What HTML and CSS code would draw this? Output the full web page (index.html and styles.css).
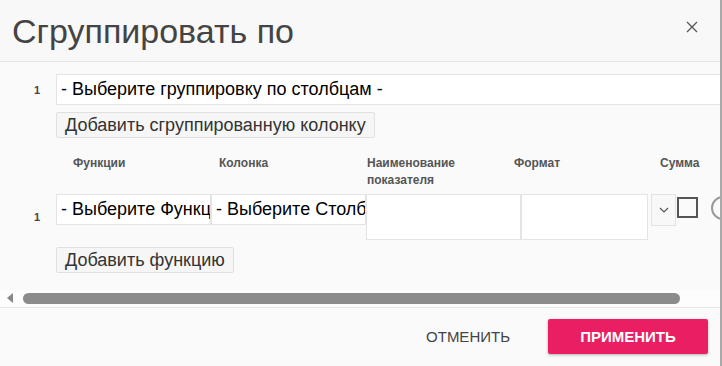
FILE: index.html
```html
<!DOCTYPE html>
<html lang="ru">
<head>
    <meta charset="UTF-8">
    <title>Сгруппировать по</title>
    <link rel="stylesheet" href="styles.css">
</head>
<body>
    <div class="modal">
        <header class="modal-header">
            <h1>Сгруппировать по</h1>
            <button class="close-btn" aria-label="Закрыть">
                <svg width="12" height="12" viewBox="0 0 12 12"><path d="M1 1 L11 11 M11 1 L1 11" stroke="#555" stroke-width="1.3" fill="none"/></svg>
            </button>
        </header>

        <div class="modal-body">
            <div class="scroll-area">
                <div class="row">
                    <span class="num">1</span>
                    <div class="field wide">- Выберите группировку по столбцам -</div>
                </div>
                <button class="add-btn">Добавить сгруппированную колонку</button>

                <div class="func-head">
                    <span>Функции</span>
                    <span>Колонка</span>
                    <span class="two-line">Наименование показателя</span>
                    <span>Формат</span>
                    <span>Сумма</span>
                </div>

                <div class="row func-row">
                    <span class="num">1</span>
                    <div class="field">- Выберите Функцию -</div>
                    <div class="field">- Выберите Столбец -</div>
                    <div class="field tall"></div>
                    <div class="field tall narrow"></div>
                    <div class="select-btn">
                        <svg width="10" height="6" viewBox="0 0 10 6"><path d="M1 1 L5 5 L9 1" stroke="#555" stroke-width="1.2" fill="none"/></svg>
                    </div>
                    <span class="checkbox"></span>
                    <span class="circle"></span>
                </div>
                <button class="add-btn">Добавить функцию</button>
            </div>

            <div class="scrollbar">
                <span class="arrow-left"></span>
                <span class="thumb"></span>
            </div>
        </div>

        <footer class="modal-footer">
            <button class="cancel-btn">Отменить</button>
            <button class="apply-btn">Применить</button>
        </footer>
    </div>
</body>
</html>
```

FILE: styles.css
```css
body {
    margin: 0;
    background-color: #a9a9a9;
    font-family: 'Liberation Sans', Arial, sans-serif;
    color: #333;
}

.modal {
    width: 720px;
    height: 366px;
    background-color: #fafafa;
    display: flex;
    flex-direction: column;
    overflow: hidden;
}

.modal-header {
    height: 61px;
    flex-shrink: 0;
    display: flex;
    justify-content: space-between;
    align-items: center;
    background-color: #f8f8f8;
    border-bottom: 1px solid #e6e6e6;
    padding: 0 22px 0 12px;
}

.modal-header h1 {
    margin: 0;
    font-size: 34px;
    font-weight: normal;
    color: #444;
    position: relative;
    top: 1px;
}

.close-btn {
    background: none;
    border: none;
    padding: 0;
    display: flex;
    position: relative;
    top: -4px;
}

.modal-body {
    height: 245px;
    flex-shrink: 0;
    display: flex;
    flex-direction: column;
    border-bottom: 1px solid #e8e8e8;
}

.scroll-area {
    flex: 1;
    overflow: hidden;
    padding-top: 12px;
}

.row {
    display: flex;
    align-items: center;
    white-space: nowrap;
}

.num {
    width: 56px;
    flex-shrink: 0;
    padding-left: 34px;
    box-sizing: border-box;
    font-size: 11px;
    font-weight: bold;
    color: #444;
}

.field {
    width: 155px;
    height: 31px;
    flex-shrink: 0;
    box-sizing: border-box;
    background-color: #fff;
    border: 1px solid #e4e4e4;
    padding: 4px 4px 0;
    font-size: 18px;
    color: #000;
    overflow: hidden;
}

.field.wide {
    width: 700px;
}

.field.tall {
    height: 46px;
    align-self: flex-start;
}

.field.narrow {
    width: 127px;
}

.add-btn {
    display: block;
    margin: 7px 0 0 56px;
    height: 26px;
    padding: 0 8px;
    background-color: #f6f6f6;
    border: 1px solid #e0e0e0;
    border-radius: 2px;
    font-family: 'Liberation Sans', Arial, sans-serif;
    font-size: 18px;
    line-height: 24px;
    color: #333;
}

.func-head {
    display: grid;
    grid-template-columns: 146px 148px 147px 146px auto;
    padding: 17px 0 0 73px;
    height: 39px;
    font-size: 12px;
    font-weight: bold;
    color: #555;
    line-height: 17px;
}

.func-head .two-line {
    max-width: 110px;
}

.func-row {
    align-items: flex-start;
    height: 46px;
}

.func-row .num {
    align-self: center;
}

.select-btn {
    width: 25px;
    height: 32px;
    flex-shrink: 0;
    margin-left: 3px;
    box-sizing: border-box;
    border: 1px solid #e2e2e2;
    background-color: #f8f8f8;
    display: flex;
    align-items: center;
    justify-content: center;
}

.checkbox {
    width: 21px;
    height: 21px;
    flex-shrink: 0;
    margin: 3px 0 0 1px;
    box-sizing: border-box;
    border: 2px solid #555;
    background-color: #fafafa;
}

.circle {
    width: 24px;
    height: 24px;
    margin: 2px 0 0 13px;
    box-sizing: border-box;
    border: 2px solid #999;
    border-radius: 50%;
    flex-shrink: 0;
}

.scrollbar {
    height: 16px;
    margin-bottom: 1px;
    background-color: #fdfdfd;
    display: flex;
    align-items: center;
    padding-left: 7px;
}

.arrow-left {
    width: 0;
    height: 0;
    border-top: 5px solid transparent;
    border-bottom: 5px solid transparent;
    border-right: 6px solid #888;
}

.thumb {
    width: 657px;
    height: 11px;
    margin-left: 10px;
    background-color: #8c8c8c;
    border-radius: 6px;
}

.modal-footer {
    flex: 1;
    display: flex;
    justify-content: flex-end;
    align-items: center;
    padding: 0 12px 2px 0;
    background-color: #fafafa;
}

.cancel-btn {
    background: none;
    border: none;
    font-family: 'Liberation Sans', Arial, sans-serif;
    font-size: 15px;
    color: #444;
    text-transform: uppercase;
    margin-right: 32px;
}

.apply-btn {
    width: 160px;
    height: 35px;
    background-color: #e91e63;
    border: none;
    border-radius: 2px;
    box-shadow: 0 1px 3px rgba(0, 0, 0, 0.3);
    font-family: 'Liberation Sans', Arial, sans-serif;
    font-size: 15px;
    font-weight: bold;
    color: #fff;
    text-transform: uppercase;
}
```
